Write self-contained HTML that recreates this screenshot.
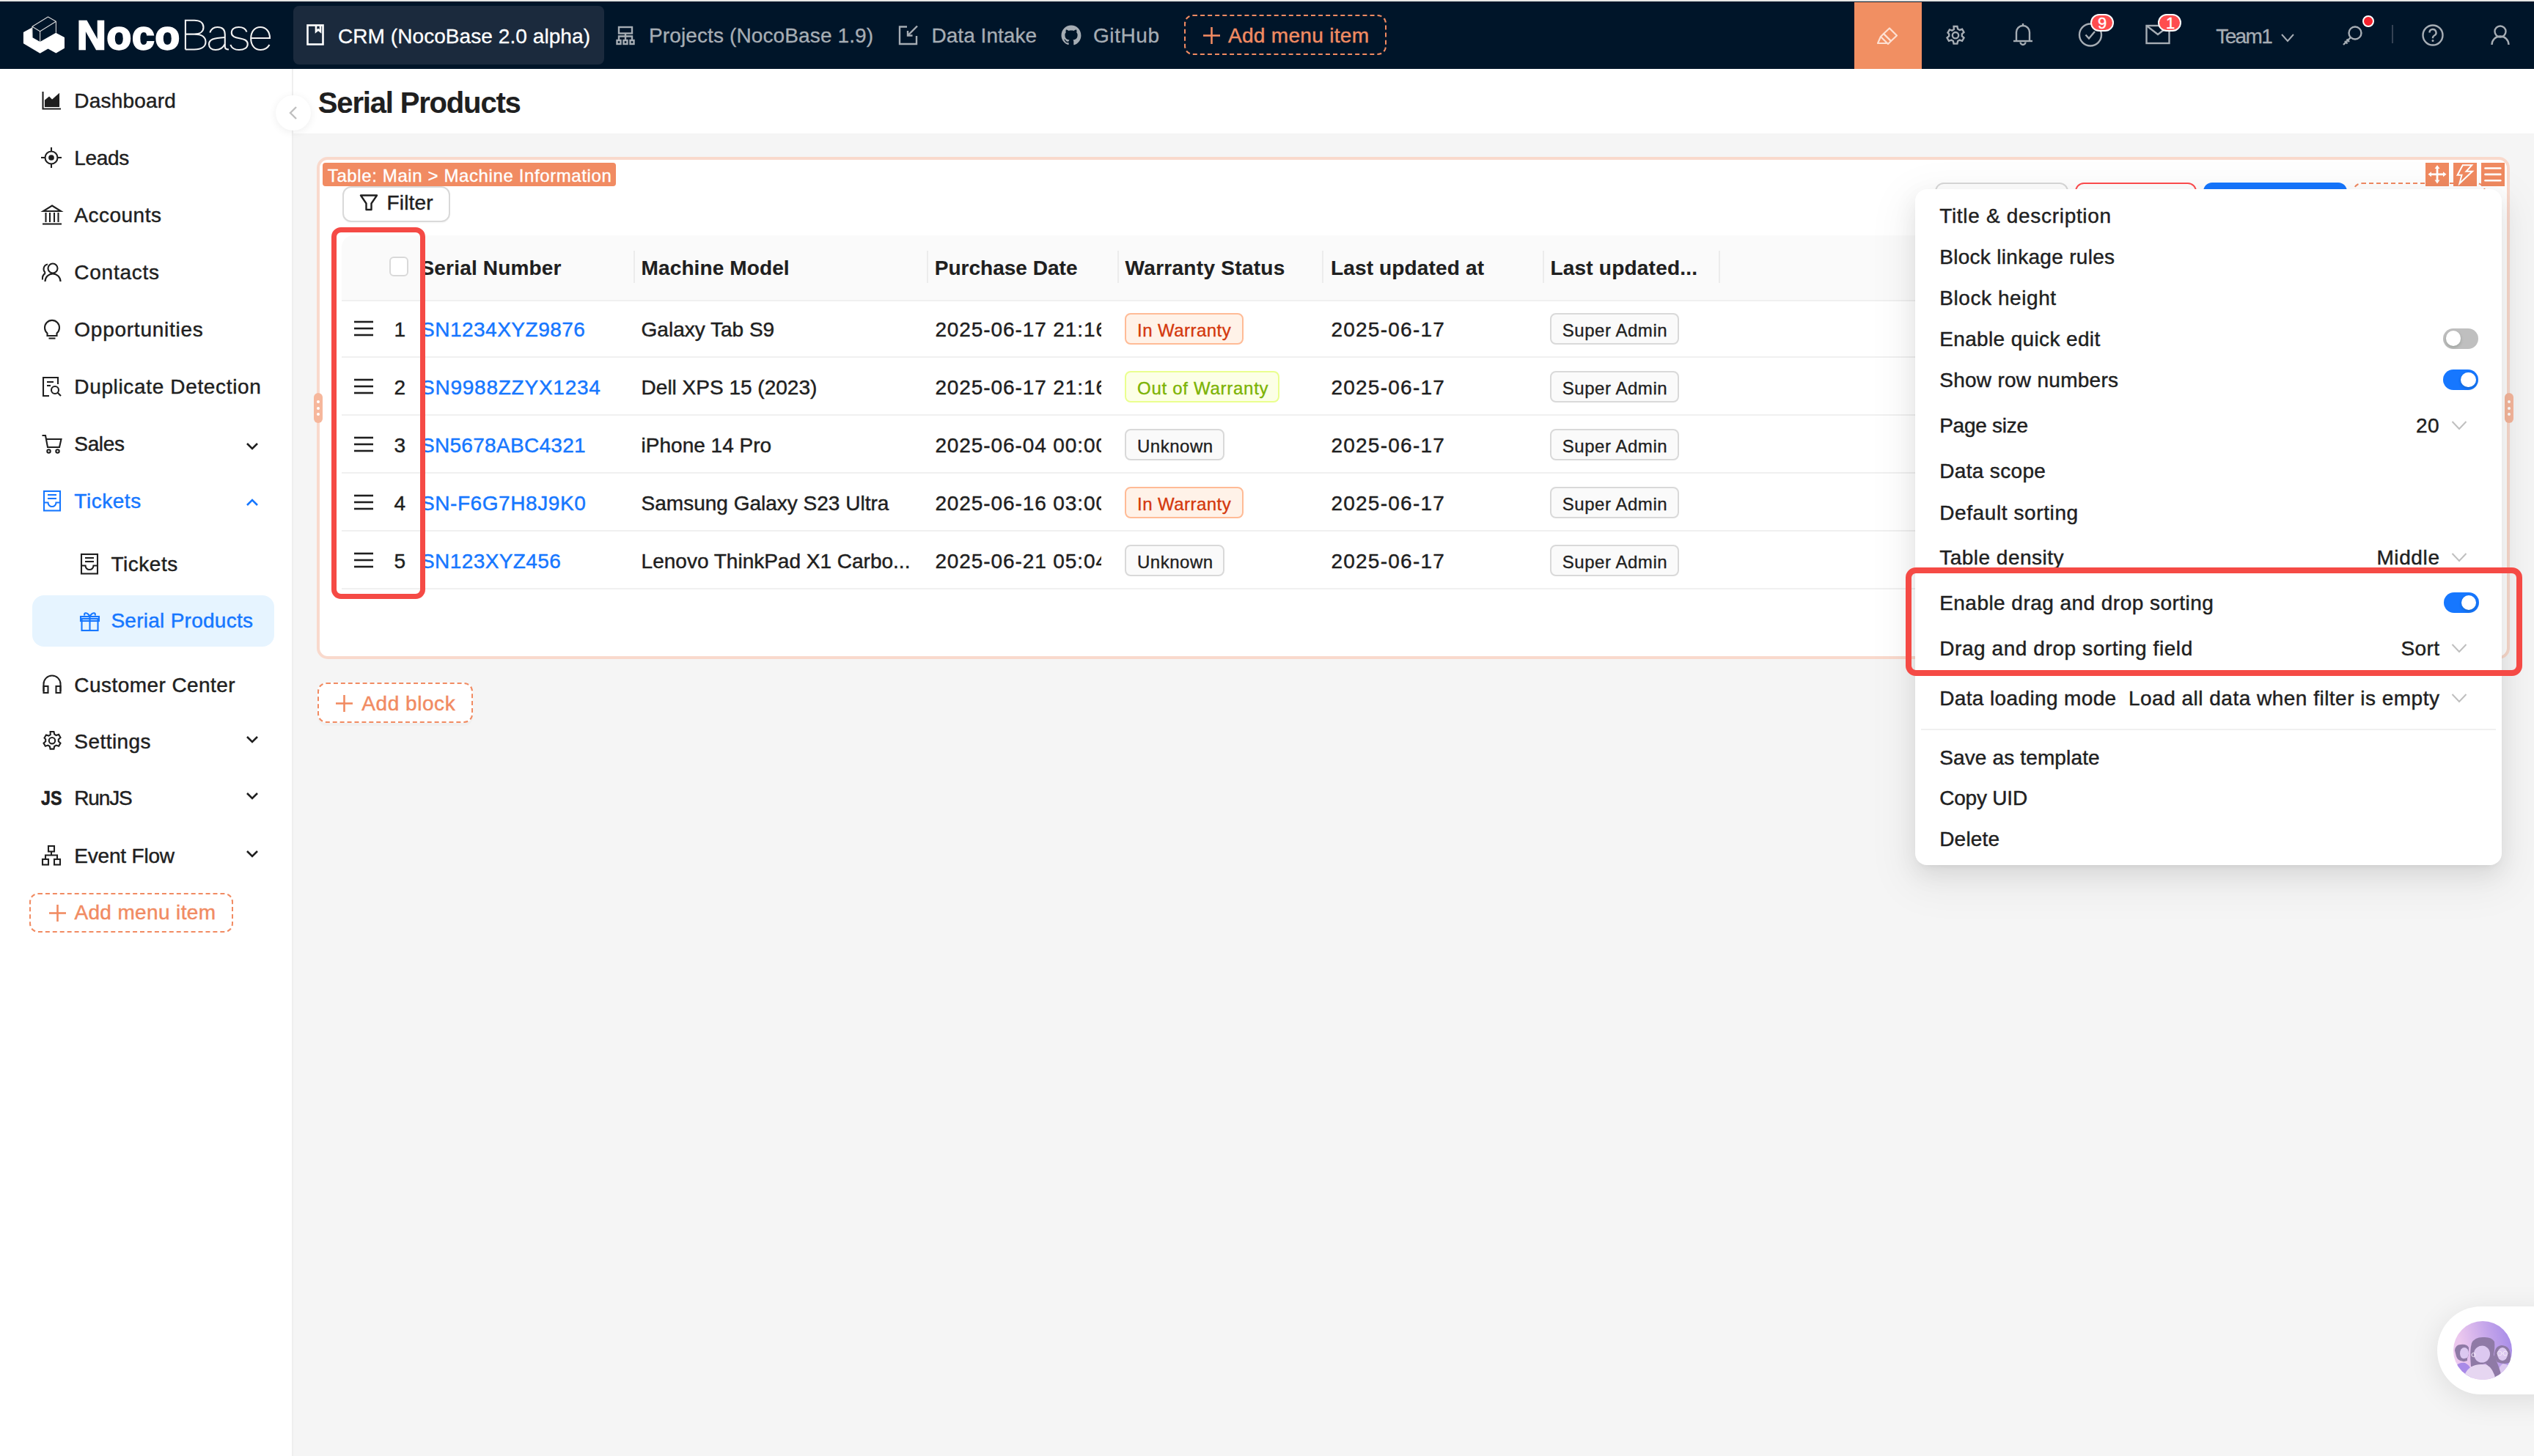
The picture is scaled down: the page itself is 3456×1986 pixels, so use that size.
<!DOCTYPE html>
<html><head><meta charset="utf-8"><title>NocoBase</title>
<style>
html,body{margin:0;padding:0;}
body{width:3456px;height:1986px;overflow:hidden;position:relative;background:#f5f5f5;font-family:"Liberation Sans",sans-serif;}
.t{position:absolute;white-space:nowrap;-webkit-text-stroke:0.45px currentColor;}
.a{position:absolute;}
svg{position:absolute;overflow:visible;}

</style></head><body>
<div class="a" style="left:0px;top:0px;width:3456px;height:1px;background:#e2e2e0"></div>
<div class="a" style="left:0px;top:1px;width:3456px;height:1px;background:#eeeeeb"></div>
<div class="a" style="left:0px;top:2px;width:3456px;height:92px;background:#001529"></div>
<div class="a" style="left:0px;top:94px;width:398px;height:1892px;background:#fff"></div>
<div class="a" style="left:398px;top:94px;width:2px;height:1892px;background:#efefef"></div>
<div class="a" style="left:400px;top:94px;width:3056px;height:88px;background:#fff"></div>
<svg style="left:0px;top:0px;" width="100" height="94" viewBox="0 0 100 94">
<polygon fill="#fff" points="31.9,44 43.8,37.6 44.1,51 54.6,56.9 76.2,44.8 88,51 88,65.8 76.4,72.6 65.5,66.4 54.6,72.8 31.9,59.2"/>
<g fill="none" stroke="#d9d9d9" stroke-width="1.1" stroke-linejoin="round">
<polyline points="43.9,36.3 65.5,23 76.4,29.3 54.6,42.7 43.9,36.3 44.1,51"/>
<line x1="54.6" y1="42.7" x2="54.6" y2="56.9"/>
<line x1="76.4" y1="29.3" x2="76.4" y2="44.8"/>
</g></svg>
<div class="t" style="left:105.0px;top:20.9px;font-size:55px;line-height:55px;color:#fff;font-weight:700;-webkit-text-stroke-width:0.15px;letter-spacing:0.83px;-webkit-text-stroke:2.4px #fff;">Noco</div>
<svg style="left:0;top:0" width="400" height="94" viewBox="0 0 400 94"><g fill="none" stroke="#f2f2f2" stroke-width="2.1">
<path d="M252.9,67.5 V27.8 H265 C273,27.8 277.5,31.5 277.5,37.2 C277.5,42.8 273,46.6 265,46.6 H252.9 M265,46.6 C275,46.6 280.5,50.5 280.5,57 C280.5,63.5 275,67.5 265,67.5 H252.9"/>
<path d="M286.3,44.5 C288,39.5 291.5,37 296.5,37 C303,37 306.8,40.5 306.8,47 V63.5 C306.8,66.2 308.8,67.5 312,67.5"/>
<path d="M306.8,51 C300,51.5 294,52 290,53.5 C286.5,55 285,57.5 285,60.5 C285,65 288.5,68 294,68 C300,68 304.5,64.5 306.8,60"/>
<path d="M336.5,43.5 C335,39 331,37 325.5,37 C319.5,37 315.8,40 315.8,44.8 C315.8,55.5 337.8,49 337.8,60 C337.8,65 333,68 326,68 C320,68 316,65.5 314.3,61"/>
<path d="M342.2,52 H368 C368,42.5 362.5,37 355,37 C347,37 342.2,43.5 342.2,52.5 C342.2,62 347.5,68 355.5,68 C361,68 365,65.5 367.5,61"/>
</g></svg>
<div class="a" style="left:400px;top:8px;width:424px;height:80px;background:#1b2a3d;border-radius:8px"></div>
<svg style="left:416px;top:32px;" width="30" height="32" viewBox="0 0 30 32"><g fill="none" stroke="#fff" stroke-width="2.6">
<rect x="3.5" y="2.5" width="21" height="26"/>
<polyline points="15,2.5 15,11 18,8.5 21,11 21,2.5"/></g></svg>
<div class="t" style="left:461.0px;top:35.7px;font-size:28px;line-height:28px;color:#fff;-webkit-text-stroke-width:0.3px;letter-spacing:0.07px;">CRM (NocoBase 2.0 alpha)</div>
<svg style="left:840px;top:35px;" width="28" height="26" viewBox="0 0 28 26"><g fill="none" stroke="#a6adb4" stroke-width="2.4">
<rect x="4" y="2" width="18" height="8.5"/>
<polyline points="13,10.5 13,14.5"/><polyline points="4,20 4,14.5 22,14.5 22,20"/><line x1="13" y1="14.5" x2="13" y2="20"/>
<rect x="1.5" y="20" width="5" height="5"/><rect x="10.5" y="20" width="5" height="5"/><rect x="19.5" y="20" width="5" height="5"/></g></svg>
<div class="t" style="left:885.0px;top:35.1px;font-size:28px;line-height:28px;color:#a6adb4;-webkit-text-stroke-width:0.3px;letter-spacing:0.12px;">Projects (NocoBase 1.9)</div>
<svg style="left:1224px;top:33px;" width="30" height="30" viewBox="0 0 30 30"><g fill="none" stroke="#a6adb4" stroke-width="2.4">
<polyline points="13,3.5 3,3.5 3,27 26,27 26,16"/>
<line x1="27" y1="2.5" x2="14" y2="15.5"/><polyline points="14,9 14,15.5 20.5,15.5"/></g></svg>
<div class="t" style="left:1270.5px;top:35.1px;font-size:28px;line-height:28px;color:#a6adb4;-webkit-text-stroke-width:0.3px;letter-spacing:0.03px;">Data Intake</div>
<svg style="left:1446px;top:33px;" width="30" height="30" viewBox="0 0 30 30"><path fill="#a6adb4" d="M15 1.5C7.5 1.5 1.5 7.6 1.5 15.2c0 6 3.9 11.1 9.2 12.9.7.1.9-.3.9-.6v-2.3c-3.8.8-4.6-1.6-4.6-1.6-.6-1.6-1.5-2-1.5-2-1.2-.8.1-.8.1-.8 1.4.1 2.1 1.4 2.1 1.4 1.2 2.1 3.2 1.5 4 1.1.1-.9.5-1.5.9-1.8-3-.3-6.2-1.5-6.2-6.7 0-1.5.5-2.7 1.4-3.6-.1-.4-.6-1.7.1-3.6 0 0 1.1-.4 3.7 1.4 1.1-.3 2.2-.4 3.4-.4s2.3.1 3.4.4c2.6-1.8 3.7-1.4 3.7-1.4.7 1.9.3 3.2.1 3.6.9.9 1.4 2.2 1.4 3.6 0 5.2-3.2 6.4-6.2 6.7.5.4.9 1.2.9 2.5v3.7c0 .4.2.7.9.6 5.3-1.8 9.2-6.9 9.2-12.9C28.5 7.6 22.5 1.5 15 1.5z"/></svg>
<div class="t" style="left:1491.0px;top:35.1px;font-size:28px;line-height:28px;color:#a6adb4;-webkit-text-stroke-width:0.3px;letter-spacing:0.57px;">GitHub</div>
<div class="a" style="left:1615px;top:19.5px;width:275.5px;height:55.2px;border:2px dashed #f18b62;border-radius:12px;box-sizing:border-box"></div>
<svg style="left:1640px;top:36px;" width="26" height="26" viewBox="0 0 26 26"><g stroke="#f18b62" stroke-width="2.6"><line x1="12.5" y1="1" x2="12.5" y2="24"/><line x1="1" y1="12.5" x2="24" y2="12.5"/></g></svg>
<div class="t" style="left:1675.0px;top:35.1px;font-size:28px;line-height:28px;color:#f18b62;letter-spacing:0.31px;">Add menu item</div>
<div class="a" style="left:2529px;top:3px;width:92px;height:91px;background:#f18f62"></div>
<svg style="left:2558px;top:36px;" width="32" height="26" viewBox="0 0 32 26"><g fill="none" stroke="#fde0d2" stroke-width="2.2" stroke-linejoin="round">
<polygon points="19,2.5 29,12.5 21,20 11,10"/>
<polygon points="11,10 21,20 17,24 7,14"/>
<polyline points="7,14 3,23 15.5,23"/>
</g></svg>
<svg style="left:2652px;top:34px;" width="30" height="30" viewBox="0 0 30 30"><g fill="none" stroke="#a6adb4" stroke-width="2.4">
<path d="M12.6 2h4.8l.8 3.6 2.4 1.4 3.5-1.2 2.4 4.2-2.7 2.4v2.8l2.7 2.4-2.4 4.2-3.5-1.2-2.4 1.4-.8 3.6h-4.8l-.8-3.6-2.4-1.4-3.5 1.2-2.4-4.2 2.7-2.4v-2.8L4.5 10.6l2.4-4.2 3.5 1.2 2.4-1.4z"/>
<circle cx="15" cy="14.2" r="4.2"/></g></svg>
<svg style="left:2745px;top:30px;" width="28" height="34" viewBox="0 0 28 34"><g fill="none" stroke="#a6adb4" stroke-width="2.4">
<path d="M5 26V14a9 9 0 0 1 18 0v12"/><line x1="1" y1="26" x2="27" y2="26"/>
<path d="M10.5 27.5a3.5 3.5 0 0 0 7 0"/><line x1="14" y1="2" x2="14" y2="5"/></g></svg>
<svg style="left:2833px;top:30px;" width="36" height="36" viewBox="0 0 36 36"><g fill="none" stroke="#a6adb4" stroke-width="2.4">
<circle cx="18" cy="17.5" r="15"/><polyline points="11.5,17.5 16,22.5 24,13"/></g></svg>
<div class="a" style="left:2850.7px;top:19px;width:32.30000000000018px;height:23.700000000000003px;background:#ff4d4f;border:2px solid #fff;border-radius:12px;box-sizing:border-box"></div>
<div class="t" style="left:2861.0px;top:20.7px;font-size:22px;line-height:22px;color:#fff;-webkit-text-stroke-width:0.35px;">9</div>
<svg style="left:2925px;top:33px;" width="36" height="28" viewBox="0 0 36 28"><g fill="none" stroke="#a6adb4" stroke-width="2.4">
<rect x="2.5" y="2" width="31" height="24"/><polyline points="2.5,2 18,14 33.5,2"/></g></svg>
<div class="a" style="left:2943px;top:19px;width:31.699999999999818px;height:23.700000000000003px;background:#ff4d4f;border:2px solid #fff;border-radius:12px;box-sizing:border-box"></div>
<div class="t" style="left:2954.0px;top:20.7px;font-size:22px;line-height:22px;color:#fff;-webkit-text-stroke-width:0.35px;">1</div>
<div class="t" style="left:3022.3px;top:36.1px;font-size:28px;line-height:28px;color:#a6adb4;-webkit-text-stroke-width:0.3px;letter-spacing:-1.64px;">Team1</div>
<svg style="left:3110px;top:44px;" width="20" height="16" viewBox="0 0 20 16"><polyline fill="none" stroke="#a6adb4" stroke-width="2" points="2,3 10,12 18,3"/></svg>
<svg style="left:3193px;top:34px;" width="30" height="30" viewBox="0 0 30 30"><g fill="none" stroke="#a6adb4" stroke-width="2.4">
<circle cx="19" cy="11" r="8.5"/><line x1="13" y1="17" x2="3" y2="27"/>
<line x1="5" y1="22" x2="8.5" y2="25.5"/><line x1="7.5" y1="19.5" x2="11" y2="23"/></g></svg>
<div class="a" style="left:3221.6px;top:20.8px;width:16.40000000000009px;height:16.400000000000002px;background:#f5222d;border:2px solid #fff;border-radius:50%;box-sizing:border-box"></div>
<div class="a" style="left:3262px;top:34px;width:2px;height:24.5px;background:#354254"></div>
<svg style="left:3302px;top:32px;" width="32" height="32" viewBox="0 0 32 32"><g fill="none" stroke="#a6adb4" stroke-width="2.4">
<circle cx="16" cy="16" r="13.5"/><path d="M11.5 12.5a4.5 4.5 0 1 1 6.5 4c-1.3.7-2 1.5-2 2.8v1"/></g>
<circle cx="16" cy="23.5" r="1.5" fill="#a6adb4"/></svg>
<svg style="left:3396px;top:33px;" width="28" height="30" viewBox="0 0 28 30"><g fill="none" stroke="#a6adb4" stroke-width="2.4">
<circle cx="14" cy="10" r="7.5"/><path d="M2.5 28a11.5 11.5 0 0 1 23 0"/></g></svg>
<div class="t" style="left:101.3px;top:124.1px;font-size:28px;line-height:28px;color:#1f1f1f;letter-spacing:0.19px;">Dashboard</div>
<div class="t" style="left:101.3px;top:202.2px;font-size:28px;line-height:28px;color:#1f1f1f;letter-spacing:-0.32px;">Leads</div>
<div class="t" style="left:101.3px;top:280.1px;font-size:28px;line-height:28px;color:#1f1f1f;letter-spacing:0.50px;">Accounts</div>
<div class="t" style="left:101.3px;top:358.1px;font-size:28px;line-height:28px;color:#1f1f1f;letter-spacing:0.74px;">Contacts</div>
<div class="t" style="left:101.3px;top:436.1px;font-size:28px;line-height:28px;color:#1f1f1f;letter-spacing:0.75px;">Opportunities</div>
<div class="t" style="left:101.3px;top:514.1px;font-size:28px;line-height:28px;color:#1f1f1f;letter-spacing:0.65px;">Duplicate Detection</div>
<div class="t" style="left:101.3px;top:592.1px;font-size:28px;line-height:28px;color:#1f1f1f;letter-spacing:-0.34px;">Sales</div>
<div class="t" style="left:101.3px;top:669.7px;font-size:28px;line-height:28px;color:#1677ff;letter-spacing:0.54px;">Tickets</div>
<div class="t" style="left:151.4px;top:755.5px;font-size:28px;line-height:28px;color:#1f1f1f;letter-spacing:0.54px;">Tickets</div>
<div class="a" style="left:44px;top:812.2px;width:329.8px;height:69.39999999999998px;background:#e6f4ff;border-radius:16px"></div>
<div class="t" style="left:151.4px;top:833.2px;font-size:28px;line-height:28px;color:#1677ff;letter-spacing:0.27px;">Serial Products</div>
<div class="t" style="left:101.3px;top:920.5px;font-size:28px;line-height:28px;color:#1f1f1f;letter-spacing:0.44px;">Customer Center</div>
<div class="t" style="left:101.3px;top:997.9px;font-size:28px;line-height:28px;color:#1f1f1f;letter-spacing:0.45px;">Settings</div>
<div class="t" style="left:101.3px;top:1075.4px;font-size:28px;line-height:28px;color:#1f1f1f;letter-spacing:-1.16px;">RunJS</div>
<div class="t" style="left:101.3px;top:1153.6px;font-size:28px;line-height:28px;color:#1f1f1f;letter-spacing:-0.20px;">Event Flow</div>
<div class="a" style="left:40.2px;top:1217.8px;width:278.2px;height:54.600000000000136px;border:2px dashed #f18b62;border-radius:12px;box-sizing:border-box"></div>
<svg style="left:66px;top:1233px;" width="26" height="26" viewBox="0 0 26 26"><g stroke="#f18b62" stroke-width="2.6"><line x1="12.5" y1="1" x2="12.5" y2="24"/><line x1="1" y1="12.5" x2="24" y2="12.5"/></g></svg>
<div class="t" style="left:101.4px;top:1231.4px;font-size:28px;line-height:28px;color:#f18b62;letter-spacing:0.36px;">Add menu item</div>
<svg style="left:335px;top:601px;" width="18" height="16" viewBox="0 0 18 16"><polyline fill="none" stroke="#1f1f1f" stroke-width="2.6" points="2,4 9,11 16,4"/></svg>
<svg style="left:335px;top:676.6px;" width="18" height="16" viewBox="0 0 18 16"><polyline fill="none" stroke="#1677ff" stroke-width="2.6" points="2,12 9,5 16,12"/></svg>
<svg style="left:335px;top:1000.8px;" width="18" height="16" viewBox="0 0 18 16"><polyline fill="none" stroke="#1f1f1f" stroke-width="2.6" points="2,4 9,11 16,4"/></svg>
<svg style="left:335px;top:1078.3px;" width="18" height="16" viewBox="0 0 18 16"><polyline fill="none" stroke="#1f1f1f" stroke-width="2.6" points="2,4 9,11 16,4"/></svg>
<svg style="left:335px;top:1156.5px;" width="18" height="16" viewBox="0 0 18 16"><polyline fill="none" stroke="#1f1f1f" stroke-width="2.6" points="2,4 9,11 16,4"/></svg>
<svg style="left:56px;top:122.0px;" width="30" height="30" viewBox="0 0 30 30"><g fill="none" stroke="#1f1f1f" stroke-width="2.1"><polyline points="2.5,3 2.5,26.5 27,26.5"/><polygon fill="#1f1f1f" points="6,23 6,15 11,11 15,15 24,7 24,23"/></g></svg>
<svg style="left:55px;top:200.0px;" width="30" height="30" viewBox="0 0 30 30"><g fill="none" stroke="#1f1f1f" stroke-width="2.1"><circle cx="15" cy="15" r="8.5"/><circle cx="15" cy="15" r="2.8" fill="#1f1f1f"/><line x1="15" y1="1" x2="15" y2="6.5"/><line x1="15" y1="23.5" x2="15" y2="29"/><line x1="1" y1="15" x2="6.5" y2="15"/><line x1="23.5" y1="15" x2="29" y2="15"/></g></svg>
<svg style="left:56px;top:278.0px;" width="30" height="30" viewBox="0 0 30 30"><g fill="none" stroke="#1f1f1f" stroke-width="2.1"><polygon points="15,2.5 27,10 3,10"/><line x1="2" y1="27.5" x2="28" y2="27.5"/><line x1="6.5" y1="12" x2="6.5" y2="25"/><line x1="12" y1="12" x2="12" y2="25"/><line x1="18" y1="12" x2="18" y2="25"/><line x1="23.5" y1="12" x2="23.5" y2="25"/></g></svg>
<svg style="left:56px;top:356.0px;" width="30" height="30" viewBox="0 0 30 30"><g fill="none" stroke="#1f1f1f" stroke-width="2.1"><circle cx="16" cy="10" r="6.5"/><path d="M5.5 28a10.5 10.5 0 0 1 21 0"/><path d="M9 4.5a6.5 6.5 0 0 0-3 11.5"/><path d="M6 16.5a9 9 0 0 0-4 9"/></g></svg>
<svg style="left:56px;top:434.0px;" width="30" height="30" viewBox="0 0 30 30"><g fill="none" stroke="#1f1f1f" stroke-width="2.1"><path d="M8.5 20.5a10 10 0 1 1 13 0v3.5h-13z"/><line x1="10.5" y1="27.5" x2="19.5" y2="27.5"/></g></svg>
<svg style="left:56px;top:512.0px;" width="30" height="30" viewBox="0 0 30 30"><g fill="none" stroke="#1f1f1f" stroke-width="2.1"><polyline points="23,12 23,3 3,3 3,28 11,28"/><line x1="8" y1="9" x2="17" y2="9"/><line x1="8" y1="14" x2="13" y2="14"/><circle cx="19" cy="20" r="5"/><line x1="22.5" y1="23.5" x2="27" y2="28"/></g></svg>
<svg style="left:56px;top:590.0px;" width="30" height="30" viewBox="0 0 30 30"><g fill="none" stroke="#1f1f1f" stroke-width="2.1"><polyline points="1.5,4 6,4 9,20 25,20 27.5,9 7,9"/><circle cx="10.5" cy="25.5" r="2.2"/><circle cx="22.5" cy="25.5" r="2.2"/></g></svg>
<svg style="left:57px;top:666.7px;" width="28" height="32" viewBox="0 0 28 32"><g fill="none" stroke="#1677ff" stroke-width="2.1"><rect x="3" y="3" width="22" height="26.5"/><line x1="8" y1="8" x2="20" y2="8"/><line x1="8" y1="13" x2="20" y2="13"/><path d="M3 18.5h5.5a5.5 5.5 0 0 0 11 0H25"/></g></svg>
<svg style="left:108px;top:752.8px;" width="28" height="32" viewBox="0 0 28 32"><g fill="none" stroke="#1f1f1f" stroke-width="2.1"><rect x="3" y="3" width="22" height="26.5"/><line x1="8" y1="8" x2="20" y2="8"/><line x1="8" y1="13" x2="20" y2="13"/><path d="M3 18.5h5.5a5.5 5.5 0 0 0 11 0H25"/></g></svg>
<svg style="left:108px;top:832.0px;" width="30" height="30" viewBox="0 0 30 30"><g fill="none" stroke="#1677ff" stroke-width="2.1"><rect x="3.5" y="12" width="22" height="16"/><rect x="2" y="9" width="25" height="6"/><line x1="14.5" y1="9" x2="14.5" y2="28"/><path d="M14.5 9c-3-6-9-6-7-1.5M14.5 9c3-6 9-6 7-1.5"/></g></svg>
<svg style="left:56px;top:918.0px;" width="30" height="30" viewBox="0 0 30 30"><g fill="none" stroke="#1f1f1f" stroke-width="2.1"><path d="M3.5 25V15a11.5 11.5 0 0 1 23 0v10"/><rect x="3.5" y="18" width="6" height="9"/><rect x="20.5" y="18" width="6" height="9"/></g></svg>
<svg style="left:56px;top:995.5px;" width="30" height="30" viewBox="0 0 30 30"><g fill="none" stroke="#1f1f1f" stroke-width="2.1"><path d="M12.6 2h4.8l.8 3.6 2.4 1.4 3.5-1.2 2.4 4.2-2.7 2.4v2.8l2.7 2.4-2.4 4.2-3.5-1.2-2.4 1.4-.8 3.6h-4.8l-.8-3.6-2.4-1.4-3.5 1.2-2.4-4.2 2.7-2.4v-2.8L4.5 10.6l2.4-4.2 3.5 1.2 2.4-1.4z"/><circle cx="15" cy="14.2" r="4.2"/></g></svg>
<div class="t" style="left:55.5px;top:1076.2px;font-size:27px;line-height:27px;color:#1f1f1f;font-weight:700;-webkit-text-stroke-width:0.15px;-webkit-text-stroke-width:0.6px;transform:scaleX(0.86);transform-origin:0 0;">JS</div>
<svg style="left:56px;top:1151.5px;" width="30" height="30" viewBox="0 0 30 30"><g fill="none" stroke="#1f1f1f" stroke-width="2.1"><rect x="10" y="2" width="8" height="7.5"/><rect x="2" y="20" width="8" height="7.5"/><rect x="18" y="20" width="8" height="7.5"/><polyline points="6,20 6,14.5 22,14.5 22,20"/><line x1="14" y1="9.5" x2="14" y2="14.5"/></g></svg>
<div class="a" style="left:376px;top:130px;width:48px;height:48px;background:#fff;border-radius:50%;box-shadow:0 2px 12px rgba(0,0,0,0.07)"></div>
<svg style="left:392px;top:144px;" width="16" height="20" viewBox="0 0 16 20"><polyline fill="none" stroke="#bfbfbf" stroke-width="2.4" points="12,2 4,10 12,18"/></svg>
<div class="t" style="left:433.8px;top:120.0px;font-size:40px;line-height:40px;color:#1f1f1f;font-weight:700;-webkit-text-stroke-width:0.15px;letter-spacing:-1.17px;">Serial Products</div>
<div class="a" style="left:432.2px;top:214.2px;width:2991.0px;height:684.5999999999999px;background:#fff;border:4px solid #f9d9cc;border-radius:15px;box-sizing:border-box"></div>
<div class="a" style="left:440px;top:222px;width:400px;height:32px;background:#f18b62;border-radius:4px"></div>
<div class="t" style="left:446.8px;top:227.5px;font-size:24px;line-height:24px;color:#fff;-webkit-text-stroke-width:0.35px;letter-spacing:0.61px;">Table: Main &gt; Machine Information</div>
<div class="a" style="left:467px;top:254px;width:146.70000000000005px;height:48.60000000000002px;background:#fff;border:2px solid #d9d9d9;border-radius:12px;box-sizing:border-box;box-shadow:0 2px 0 rgba(0,0,0,0.02)"></div>
<svg style="left:490px;top:264px;" width="28" height="24" viewBox="0 0 28 24"><path fill="none" stroke="#1f1f1f" stroke-width="2.4" stroke-linejoin="round" d="M2 2.5h22l-7.5 11v8.5h-7v-8.5z"/></svg>
<div class="t" style="left:527.5px;top:263.1px;font-size:28px;line-height:28px;color:#1f1f1f;letter-spacing:0.17px;">Filter</div>
<div class="a" style="left:2638.8px;top:248.5px;width:182.5px;height:63.5px;background:#fff;border:2px solid #d9d9d9;border-radius:12px;box-sizing:border-box"></div>
<div class="a" style="left:2830.2px;top:248.5px;width:165.9000000000001px;height:63.5px;background:#fff;border:2px solid #ff4d4f;border-radius:12px;box-sizing:border-box"></div>
<div class="a" style="left:3005px;top:248.5px;width:195.69999999999982px;height:63.5px;background:#1677ff;border-radius:12px"></div>
<div class="a" style="left:3209px;top:248.5px;width:181.4000000000001px;height:63.5px;background:#fff;border:2px dashed #f18b62;border-radius:12px;box-sizing:border-box"></div>
<div class="a" style="left:465.7px;top:320.5px;width:2924.3px;height:88.0px;background:#fafafa;border-radius:16px 16px 0 0"></div>
<div class="a" style="left:465.7px;top:408.5px;width:2924.3px;height:2.0px;background:#f0f0f0"></div>
<div class="a" style="left:465.7px;top:486.4px;width:2924.3px;height:2.0px;background:#f0f0f0"></div>
<div class="a" style="left:465.7px;top:565.4px;width:2924.3px;height:2.0px;background:#f0f0f0"></div>
<div class="a" style="left:465.7px;top:644.4px;width:2924.3px;height:2.0px;background:#f0f0f0"></div>
<div class="a" style="left:465.7px;top:723.4px;width:2924.3px;height:2.0px;background:#f0f0f0"></div>
<div class="a" style="left:465.7px;top:802.4px;width:2924.3px;height:2.0px;background:#f0f0f0"></div>
<div class="a" style="left:864px;top:342px;width:2px;height:44px;background:#ececec"></div>
<div class="a" style="left:1263.6px;top:342px;width:2.0px;height:44px;background:#ececec"></div>
<div class="a" style="left:1524px;top:342px;width:2px;height:44px;background:#ececec"></div>
<div class="a" style="left:1803.3px;top:342px;width:2.0px;height:44px;background:#ececec"></div>
<div class="a" style="left:2103.8px;top:342px;width:2.0px;height:44px;background:#ececec"></div>
<div class="a" style="left:2344px;top:342px;width:2px;height:44px;background:#ececec"></div>
<div class="a" style="left:530.6px;top:350.4px;width:26.799999999999955px;height:26.600000000000023px;background:#fff;border:2px solid #d9d9d9;border-radius:6px;box-sizing:border-box"></div>
<div class="t" style="left:573.5px;top:351.6px;font-size:28px;line-height:28px;color:#1f1f1f;font-weight:700;-webkit-text-stroke-width:0.15px;letter-spacing:0.18px;">Serial Number</div>
<div class="t" style="left:874.6px;top:351.6px;font-size:28px;line-height:28px;color:#1f1f1f;font-weight:700;-webkit-text-stroke-width:0.15px;letter-spacing:0.11px;">Machine Model</div>
<div class="t" style="left:1274.7px;top:351.6px;font-size:28px;line-height:28px;color:#1f1f1f;font-weight:700;-webkit-text-stroke-width:0.15px;letter-spacing:0.02px;">Purchase Date</div>
<div class="t" style="left:1534.6px;top:351.6px;font-size:28px;line-height:28px;color:#1f1f1f;font-weight:700;-webkit-text-stroke-width:0.15px;letter-spacing:0.29px;">Warranty Status</div>
<div class="t" style="left:1815.0px;top:351.6px;font-size:28px;line-height:28px;color:#1f1f1f;font-weight:700;-webkit-text-stroke-width:0.15px;letter-spacing:0.15px;">Last updated at</div>
<div class="t" style="left:2114.4px;top:351.6px;font-size:28px;line-height:28px;color:#1f1f1f;font-weight:700;-webkit-text-stroke-width:0.15px;letter-spacing:0.22px;">Last updated...</div>
<svg style="left:482px;top:436.9px;" width="28" height="24" viewBox="0 0 28 24"><g stroke="#1f1f1f" stroke-width="2.6"><line x1="1" y1="2" x2="27" y2="2"/><line x1="1" y1="11" x2="27" y2="11"/><line x1="1" y1="20" x2="27" y2="20"/></g></svg>
<div class="t" style="left:537.5px;top:436.0px;font-size:28px;line-height:28px;color:#1f1f1f;">1</div>
<div class="t" style="left:574.0px;top:436.0px;font-size:28px;line-height:28px;color:#1677ff;letter-spacing:0.50px;">SN1234XYZ9876</div>
<div class="t" style="left:874.6px;top:436.0px;font-size:28px;line-height:28px;color:#1f1f1f;">Galaxy Tab S9</div>
<div class="a" style="left:1275px;top:428.9px;width:227px;height:40px;overflow:hidden">
<div class="t" style="left:0.4px;top:7.1px;font-size:28px;line-height:28px;color:#1f1f1f;letter-spacing:0.90px;">2025-06-17 21:16</div>
</div>
<div class="a" style="left:1534.3px;top:427.4px;width:161.4000000000001px;height:43.0px;background:#fff2e8;border:2px solid #ffbb96;border-radius:8px;box-sizing:border-box"></div>
<div class="t" style="left:1551.0px;top:438.6px;font-size:24px;line-height:24px;color:#d4380d;-webkit-text-stroke-width:0.35px;letter-spacing:0.46px;">In Warranty</div>
<div class="t" style="left:1815.4px;top:436.0px;font-size:28px;line-height:28px;color:#1f1f1f;letter-spacing:1.25px;">2025-06-17</div>
<div class="a" style="left:2114.4px;top:427.4px;width:176.0999999999999px;height:43.0px;background:#fafafa;border:2px solid #d9d9d9;border-radius:8px;box-sizing:border-box"></div>
<div class="t" style="left:2130.8px;top:438.7px;font-size:24px;line-height:24px;color:#1f1f1f;-webkit-text-stroke-width:0.35px;letter-spacing:0.54px;">Super Admin</div>
<svg style="left:482px;top:515.9px;" width="28" height="24" viewBox="0 0 28 24"><g stroke="#1f1f1f" stroke-width="2.6"><line x1="1" y1="2" x2="27" y2="2"/><line x1="1" y1="11" x2="27" y2="11"/><line x1="1" y1="20" x2="27" y2="20"/></g></svg>
<div class="t" style="left:537.5px;top:515.0px;font-size:28px;line-height:28px;color:#1f1f1f;">2</div>
<div class="t" style="left:574.0px;top:515.0px;font-size:28px;line-height:28px;color:#1677ff;letter-spacing:0.76px;">SN9988ZZYX1234</div>
<div class="t" style="left:874.6px;top:515.0px;font-size:28px;line-height:28px;color:#1f1f1f;">Dell XPS 15 (2023)</div>
<div class="a" style="left:1275px;top:507.9px;width:227px;height:40px;overflow:hidden">
<div class="t" style="left:0.4px;top:7.1px;font-size:28px;line-height:28px;color:#1f1f1f;letter-spacing:0.90px;">2025-06-17 21:16</div>
</div>
<div class="a" style="left:1534.3px;top:506.4px;width:211.10000000000014px;height:43.0px;background:#fcffe6;border:2px solid #eaff8f;border-radius:8px;box-sizing:border-box"></div>
<div class="t" style="left:1551.0px;top:517.6px;font-size:24px;line-height:24px;color:#7cb305;-webkit-text-stroke-width:0.35px;letter-spacing:0.72px;">Out of Warranty</div>
<div class="t" style="left:1815.4px;top:515.0px;font-size:28px;line-height:28px;color:#1f1f1f;letter-spacing:1.25px;">2025-06-17</div>
<div class="a" style="left:2114.4px;top:506.4px;width:176.0999999999999px;height:43.0px;background:#fafafa;border:2px solid #d9d9d9;border-radius:8px;box-sizing:border-box"></div>
<div class="t" style="left:2130.8px;top:517.7px;font-size:24px;line-height:24px;color:#1f1f1f;-webkit-text-stroke-width:0.35px;letter-spacing:0.54px;">Super Admin</div>
<svg style="left:482px;top:594.9px;" width="28" height="24" viewBox="0 0 28 24"><g stroke="#1f1f1f" stroke-width="2.6"><line x1="1" y1="2" x2="27" y2="2"/><line x1="1" y1="11" x2="27" y2="11"/><line x1="1" y1="20" x2="27" y2="20"/></g></svg>
<div class="t" style="left:537.5px;top:594.0px;font-size:28px;line-height:28px;color:#1f1f1f;">3</div>
<div class="t" style="left:574.0px;top:594.0px;font-size:28px;line-height:28px;color:#1677ff;letter-spacing:0.30px;">SN5678ABC4321</div>
<div class="t" style="left:874.6px;top:594.0px;font-size:28px;line-height:28px;color:#1f1f1f;">iPhone 14 Pro</div>
<div class="a" style="left:1275px;top:586.9px;width:227px;height:40px;overflow:hidden">
<div class="t" style="left:0.4px;top:7.1px;font-size:28px;line-height:28px;color:#1f1f1f;letter-spacing:0.90px;">2025-06-04 00:00</div>
</div>
<div class="a" style="left:1534.3px;top:585.4px;width:136.10000000000014px;height:43.0px;background:#fafafa;border:2px solid #d9d9d9;border-radius:8px;box-sizing:border-box"></div>
<div class="t" style="left:1551.0px;top:596.6px;font-size:24px;line-height:24px;color:#1f1f1f;-webkit-text-stroke-width:0.35px;letter-spacing:0.52px;">Unknown</div>
<div class="t" style="left:1815.4px;top:594.0px;font-size:28px;line-height:28px;color:#1f1f1f;letter-spacing:1.25px;">2025-06-17</div>
<div class="a" style="left:2114.4px;top:585.4px;width:176.0999999999999px;height:43.0px;background:#fafafa;border:2px solid #d9d9d9;border-radius:8px;box-sizing:border-box"></div>
<div class="t" style="left:2130.8px;top:596.7px;font-size:24px;line-height:24px;color:#1f1f1f;-webkit-text-stroke-width:0.35px;letter-spacing:0.54px;">Super Admin</div>
<svg style="left:482px;top:673.9px;" width="28" height="24" viewBox="0 0 28 24"><g stroke="#1f1f1f" stroke-width="2.6"><line x1="1" y1="2" x2="27" y2="2"/><line x1="1" y1="11" x2="27" y2="11"/><line x1="1" y1="20" x2="27" y2="20"/></g></svg>
<div class="t" style="left:537.5px;top:673.0px;font-size:28px;line-height:28px;color:#1f1f1f;">4</div>
<div class="t" style="left:574.0px;top:673.0px;font-size:28px;line-height:28px;color:#1677ff;letter-spacing:0.57px;">SN-F6G7H8J9K0</div>
<div class="t" style="left:874.6px;top:673.0px;font-size:28px;line-height:28px;color:#1f1f1f;">Samsung Galaxy S23 Ultra</div>
<div class="a" style="left:1275px;top:665.9px;width:227px;height:40px;overflow:hidden">
<div class="t" style="left:0.4px;top:7.1px;font-size:28px;line-height:28px;color:#1f1f1f;letter-spacing:0.90px;">2025-06-16 03:00</div>
</div>
<div class="a" style="left:1534.3px;top:664.4px;width:161.4000000000001px;height:43.0px;background:#fff2e8;border:2px solid #ffbb96;border-radius:8px;box-sizing:border-box"></div>
<div class="t" style="left:1551.0px;top:675.6px;font-size:24px;line-height:24px;color:#d4380d;-webkit-text-stroke-width:0.35px;letter-spacing:0.46px;">In Warranty</div>
<div class="t" style="left:1815.4px;top:673.0px;font-size:28px;line-height:28px;color:#1f1f1f;letter-spacing:1.25px;">2025-06-17</div>
<div class="a" style="left:2114.4px;top:664.4px;width:176.0999999999999px;height:43.0px;background:#fafafa;border:2px solid #d9d9d9;border-radius:8px;box-sizing:border-box"></div>
<div class="t" style="left:2130.8px;top:675.7px;font-size:24px;line-height:24px;color:#1f1f1f;-webkit-text-stroke-width:0.35px;letter-spacing:0.54px;">Super Admin</div>
<svg style="left:482px;top:752.9px;" width="28" height="24" viewBox="0 0 28 24"><g stroke="#1f1f1f" stroke-width="2.6"><line x1="1" y1="2" x2="27" y2="2"/><line x1="1" y1="11" x2="27" y2="11"/><line x1="1" y1="20" x2="27" y2="20"/></g></svg>
<div class="t" style="left:537.5px;top:752.0px;font-size:28px;line-height:28px;color:#1f1f1f;">5</div>
<div class="t" style="left:574.0px;top:752.0px;font-size:28px;line-height:28px;color:#1677ff;letter-spacing:0.41px;">SN123XYZ456</div>
<div class="t" style="left:874.6px;top:752.0px;font-size:28px;line-height:28px;color:#1f1f1f;">Lenovo ThinkPad X1 Carbo...</div>
<div class="a" style="left:1275px;top:744.9px;width:227px;height:40px;overflow:hidden">
<div class="t" style="left:0.4px;top:7.1px;font-size:28px;line-height:28px;color:#1f1f1f;letter-spacing:0.90px;">2025-06-21 05:04</div>
</div>
<div class="a" style="left:1534.3px;top:743.4px;width:136.10000000000014px;height:43.0px;background:#fafafa;border:2px solid #d9d9d9;border-radius:8px;box-sizing:border-box"></div>
<div class="t" style="left:1551.0px;top:754.6px;font-size:24px;line-height:24px;color:#1f1f1f;-webkit-text-stroke-width:0.35px;letter-spacing:0.52px;">Unknown</div>
<div class="t" style="left:1815.4px;top:752.0px;font-size:28px;line-height:28px;color:#1f1f1f;letter-spacing:1.25px;">2025-06-17</div>
<div class="a" style="left:2114.4px;top:743.4px;width:176.0999999999999px;height:43.0px;background:#fafafa;border:2px solid #d9d9d9;border-radius:8px;box-sizing:border-box"></div>
<div class="t" style="left:2130.8px;top:754.7px;font-size:24px;line-height:24px;color:#1f1f1f;-webkit-text-stroke-width:0.35px;letter-spacing:0.54px;">Super Admin</div>
<div class="a" style="left:452px;top:310.2px;width:127.79999999999995px;height:506.8px;border:7.8px solid #f54a45;border-radius:13px;box-sizing:border-box"></div>
<div class="a" style="left:427.6px;top:536px;width:12px;height:41px;background:#f6b79c;border-radius:6px"></div>
<div class="a" style="left:431.6px;top:546.0px;width:4.0px;height:4.0px;background:#fff;border-radius:50%"></div>
<div class="a" style="left:431.6px;top:554.5px;width:4.0px;height:4.0px;background:#fff;border-radius:50%"></div>
<div class="a" style="left:431.6px;top:563.0px;width:4.0px;height:4.0px;background:#fff;border-radius:50%"></div>
<div class="a" style="left:3416px;top:536px;width:12px;height:41px;background:#f6b79c;border-radius:6px"></div>
<div class="a" style="left:3420px;top:546.0px;width:4px;height:4.0px;background:#fff;border-radius:50%"></div>
<div class="a" style="left:3420px;top:554.5px;width:4px;height:4.0px;background:#fff;border-radius:50%"></div>
<div class="a" style="left:3420px;top:563.0px;width:4px;height:4.0px;background:#fff;border-radius:50%"></div>
<div class="a" style="left:3307.9px;top:222.1px;width:32.0px;height:31.599999999999994px;background:#f08a60"></div>
<div class="a" style="left:3346.2px;top:222.1px;width:32.0px;height:31.599999999999994px;background:#f08a60"></div>
<div class="a" style="left:3384.1px;top:222.1px;width:32.0px;height:31.599999999999994px;background:#f08a60"></div>
<svg style="left:3307.9px;top:222.1px;" width="32" height="32" viewBox="0 0 32 32"><g stroke="#fff" stroke-width="2.8"><line x1="16" y1="6" x2="16" y2="26"/><line x1="6" y1="15.8" x2="26" y2="15.8"/></g><g fill="#fff"><polygon points="16,3.2 12.5,8 19.5,8"/><polygon points="16,28.5 12.5,23.5 19.5,23.5"/><polygon points="3.5,15.8 8,12.3 8,19.3"/><polygon points="28.5,15.8 24,12.3 24,19.3"/></g></svg>
<svg style="left:3346.2px;top:222.1px;" width="32" height="32" viewBox="0 0 32 32"><polygon fill="none" stroke="#fff" stroke-width="2" stroke-linejoin="miter" points="12.8,3.3 25.2,3.3 17.5,11.8 26,11.8 8.4,28.3 11.5,16.8 5.6,16.8"/></svg>
<svg style="left:3384.1px;top:222.1px;" width="32" height="32" viewBox="0 0 32 32"><g stroke="#fff" stroke-width="2.6" stroke-linecap="round"><line x1="5.5" y1="7.5" x2="26.3" y2="7.5"/><line x1="5.5" y1="15.9" x2="26.3" y2="15.9"/><line x1="5.5" y1="24.3" x2="26.3" y2="24.3"/></g></svg>
<div class="a" style="left:432.5px;top:931.3px;width:212.29999999999995px;height:55.200000000000045px;background:#fff;border:2px dashed #f18b62;border-radius:12px;box-sizing:border-box;box-shadow:0 4px 0 rgba(0,0,0,0.02)"></div>
<svg style="left:457px;top:947px;" width="26" height="26" viewBox="0 0 26 26"><g stroke="#f18b62" stroke-width="2.6"><line x1="12.5" y1="1" x2="12.5" y2="24"/><line x1="1" y1="12.5" x2="24" y2="12.5"/></g></svg>
<div class="t" style="left:493.3px;top:946.3px;font-size:28px;line-height:28px;color:#f18b62;letter-spacing:0.55px;">Add block</div>
<div class="a" style="left:2612px;top:258px;width:800px;height:921.8px;background:#fff;border-radius:16px;box-shadow:0 12px 32px 0 rgba(0,0,0,0.08),0 6px 12px -8px rgba(0,0,0,0.12),0 18px 56px 16px rgba(0,0,0,0.05)"></div>
<div class="t" style="left:2645.2px;top:281.3px;font-size:28px;line-height:28px;color:#1f1f1f;letter-spacing:0.69px;">Title &amp; description</div>
<div class="t" style="left:2645.2px;top:336.9px;font-size:28px;line-height:28px;color:#1f1f1f;letter-spacing:0.30px;">Block linkage rules</div>
<div class="t" style="left:2645.2px;top:392.7px;font-size:28px;line-height:28px;color:#1f1f1f;letter-spacing:0.58px;">Block height</div>
<div class="t" style="left:2645.2px;top:448.9px;font-size:28px;line-height:28px;color:#1f1f1f;letter-spacing:0.36px;">Enable quick edit</div>
<div class="t" style="left:2645.2px;top:504.8px;font-size:28px;line-height:28px;color:#1f1f1f;letter-spacing:0.28px;">Show row numbers</div>
<div class="t" style="left:2645.2px;top:567.1px;font-size:28px;line-height:28px;color:#1f1f1f;letter-spacing:-0.25px;">Page size</div>
<div class="t" style="left:2645.2px;top:629.1px;font-size:28px;line-height:28px;color:#1f1f1f;letter-spacing:0.34px;">Data scope</div>
<div class="t" style="left:2645.2px;top:685.6px;font-size:28px;line-height:28px;color:#1f1f1f;letter-spacing:0.60px;">Default sorting</div>
<div class="t" style="left:2645.2px;top:746.8px;font-size:28px;line-height:28px;color:#1f1f1f;letter-spacing:0.49px;">Table density</div>
<div class="t" style="left:2645.2px;top:809.4px;font-size:28px;line-height:28px;color:#1f1f1f;letter-spacing:0.46px;">Enable drag and drop sorting</div>
<div class="t" style="left:2645.2px;top:871.4px;font-size:28px;line-height:28px;color:#1f1f1f;letter-spacing:0.58px;">Drag and drop sorting field</div>
<div class="t" style="left:2645.2px;top:939.1px;font-size:28px;line-height:28px;color:#1f1f1f;letter-spacing:0.37px;">Data loading mode</div>
<div class="t" style="left:2645.2px;top:1019.5px;font-size:28px;line-height:28px;color:#1f1f1f;letter-spacing:0.14px;">Save as template</div>
<div class="t" style="left:2645.2px;top:1075.4px;font-size:28px;line-height:28px;color:#1f1f1f;letter-spacing:-0.20px;">Copy UID</div>
<div class="t" style="left:2645.2px;top:1131.0px;font-size:28px;line-height:28px;color:#1f1f1f;letter-spacing:0.21px;">Delete</div>
<div class="t" style="left:3295.0px;top:567.1px;font-size:28px;line-height:28px;color:#1f1f1f;letter-spacing:0.54px;">20</div>
<div class="t" style="left:3241.4px;top:746.8px;font-size:28px;line-height:28px;color:#1f1f1f;letter-spacing:0.62px;">Middle</div>
<div class="t" style="left:3274.6px;top:871.4px;font-size:28px;line-height:28px;color:#1f1f1f;letter-spacing:0.35px;">Sort</div>
<div class="t" style="left:2903.0px;top:939.1px;font-size:28px;line-height:28px;color:#1f1f1f;letter-spacing:0.49px;">Load all data when filter is empty</div>
<svg style="left:3343px;top:573px;" width="22" height="14" viewBox="0 0 22 14"><polyline fill="none" stroke="#bfbfbf" stroke-width="2" points="1.5,2 11,12 20.5,2"/></svg>
<svg style="left:3343px;top:752.7px;" width="22" height="14" viewBox="0 0 22 14"><polyline fill="none" stroke="#bfbfbf" stroke-width="2" points="1.5,2 11,12 20.5,2"/></svg>
<svg style="left:3343px;top:877.3px;" width="22" height="14" viewBox="0 0 22 14"><polyline fill="none" stroke="#bfbfbf" stroke-width="2" points="1.5,2 11,12 20.5,2"/></svg>
<svg style="left:3343px;top:945px;" width="22" height="14" viewBox="0 0 22 14"><polyline fill="none" stroke="#bfbfbf" stroke-width="2" points="1.5,2 11,12 20.5,2"/></svg>
<div class="a" style="left:3332px;top:447.7px;width:48px;height:28.0px;background:#bfbfbf;border-radius:14px"></div>
<div class="a" style="left:3335.5px;top:451.45px;width:20.5px;height:20.5px;background:#fff;border-radius:50%;box-shadow:0 2px 4px rgba(0,35,11,0.2)"></div>
<div class="a" style="left:3332px;top:504px;width:48px;height:28px;background:#1677ff;border-radius:14px"></div>
<div class="a" style="left:3356px;top:507.75px;width:20.5px;height:20.5px;background:#fff;border-radius:50%;box-shadow:0 2px 4px rgba(0,35,11,0.2)"></div>
<div class="a" style="left:3332.5px;top:808px;width:48.0px;height:28px;background:#1677ff;border-radius:14px"></div>
<div class="a" style="left:3356.5px;top:811.75px;width:20.5px;height:20.5px;background:#fff;border-radius:50%;box-shadow:0 2px 4px rgba(0,35,11,0.2)"></div>
<div class="a" style="left:2620px;top:994.3px;width:784px;height:2.0px;background:#f0f0f0"></div>
<div class="a" style="left:2598.6px;top:774.3px;width:841.0px;height:147.5px;border:8px solid #f54a45;border-radius:14px;box-sizing:border-box"></div>
<div class="a" style="left:3324px;top:1782px;width:196px;height:120px;background:#fff;border-radius:60px;box-shadow:0 8px 40px rgba(0,0,0,0.10)"></div>
<svg style="left:3346px;top:1802px" width="80" height="80" viewBox="0 0 80 80">
<defs><linearGradient id="ag" x1="0.1" y1="0.3" x2="1" y2="0.1"><stop offset="0" stop-color="#ecc8ee"/><stop offset="0.55" stop-color="#c3a4ea"/><stop offset="1" stop-color="#a48ae8"/></linearGradient>
<clipPath id="ac"><circle cx="40" cy="40" r="40"/></clipPath></defs>
<circle cx="40" cy="40" r="40" fill="url(#ag)"/>
<g clip-path="url(#ac)">
<path d="M0 80 L2 62 Q8 56 16 57 Q22 60 24 66 L26 80z" fill="#a98ae8"/>
<path d="M2 40 Q3 32 10 32 Q18 31 21 36 L21 46 Q19 54 12 54 Q6 54 4 48z" fill="#8f7aa6"/>
<ellipse cx="15" cy="44" rx="6" ry="8" fill="#dcc8f0"/>
<path d="M7 48 Q12 53 19 50 L19 54 Q12 57 7 52z" fill="#8f7aa6"/>
<path d="M56 50 Q55 34 66 33 Q78 34 78 48 L78 56 Q70 60 60 56z" fill="#8f7aa6"/>
<ellipse cx="67" cy="45" rx="7" ry="9" fill="#dcc8f0"/>
<path d="M60 80 Q60 62 68 58 Q78 60 80 66 L80 80z" fill="#dcc8f0"/>
<path d="M24 62 Q22 40 25 30 Q29 22 40 22 Q52 21 56 28 Q57 36 55 46 Q62 60 66 76 L58 80 Q50 62 44 58 L26 62z" fill="#8f7aa6"/>
<ellipse cx="39" cy="45" rx="11" ry="11.5" fill="#dcc8f0"/>
<path d="M28 36 Q32 26 44 28 Q52 30 53 36 Q48 32 40 33 Q32 34 28 40z" fill="#8f7aa6"/>
<path d="M14 80 Q16 64 30 60 Q38 58 46 60 Q54 64 58 80z" fill="#e6d6f1"/>
<circle cx="27.5" cy="46" r="2.6" fill="none" stroke="#f3eaf8" stroke-width="1"/>
<g fill="none" stroke="#f3eaf8" stroke-width="0.9"><circle cx="63" cy="44" r="3"/><circle cx="71" cy="44" r="3"/><line x1="66" y1="44" x2="68" y2="44"/></g>
</g></svg>
<script>(function(){var w=window.innerWidth;if(w&&Math.abs(w-3456)>4){document.documentElement.style.zoom=(w/3456);}})();</script>
</body></html>
